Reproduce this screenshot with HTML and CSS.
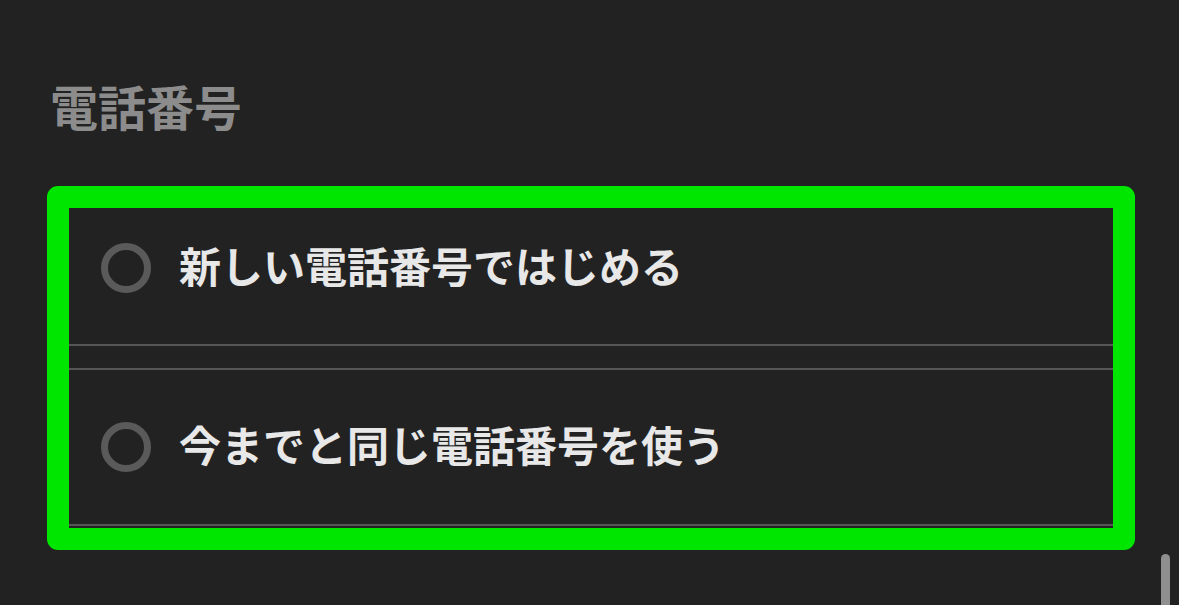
FILE: index.html
```html
<!DOCTYPE html>
<html lang="ja">
<head>
<meta charset="utf-8">
<title>電話番号</title>
<link rel="stylesheet" href="styles.css">
</head>
<body>
<div class="page">
  <h2 class="section-title">電話番号</h2>
  <div class="highlight">
    <div class="option option-first">
      <span class="radio"></span>
      <span class="label">新しい電話番号ではじめる</span>
    </div>
    <div class="group-gap"></div>
    <div class="option option-second">
      <span class="radio"></span>
      <span class="label">今までと同じ電話番号を使う</span>
    </div>
  </div>
  <div class="scrollbar"></div>
</div>
</body>
</html>
```

FILE: styles.css
```css
html, body {
  margin: 0;
  padding: 0;
  background: #222222;
}

.page {
  position: relative;
  width: 1179px;
  height: 605px;
  overflow: hidden;
  font-family: "Noto Sans CJK JP", "Noto Sans", sans-serif;
}

.section-title {
  margin: 81px 0 0 50px;
  font-size: 48px;
  line-height: 48px;
  font-weight: 700;
  color: #8c8c8c;
}

.highlight {
  box-sizing: border-box;
  margin: 57px 0 0 47px;
  width: 1088px;
  height: 364px;
  border: 22px solid #00e600;
  border-radius: 11px;
  display: flex;
  flex-direction: column;
}

.option {
  box-sizing: border-box;
  display: flex;
  align-items: center;
  gap: 28px;
  padding-left: 32px;
}

.option-first {
  height: 138px;
  padding-bottom: 17px;
  border-bottom: 2px solid #555555;
}

.group-gap {
  height: 22px;
  flex: none;
}

.option-second {
  height: 158px;
  border-top: 2px solid #555555;
  border-bottom: 2px solid #555555;
}

.radio {
  box-sizing: border-box;
  flex: none;
  width: 50px;
  height: 50px;
  border: 7px solid #5a5a5a;
  border-radius: 50%;
}

.label {
  font-size: 42px;
  line-height: 42px;
  font-weight: 700;
  color: #e8e8e8;
  margin-bottom: 6px;
}

.scrollbar {
  position: absolute;
  left: 1161px;
  top: 554px;
  width: 9px;
  height: 70px;
  border-radius: 5px;
  background: #8f8f8f;
}
```
